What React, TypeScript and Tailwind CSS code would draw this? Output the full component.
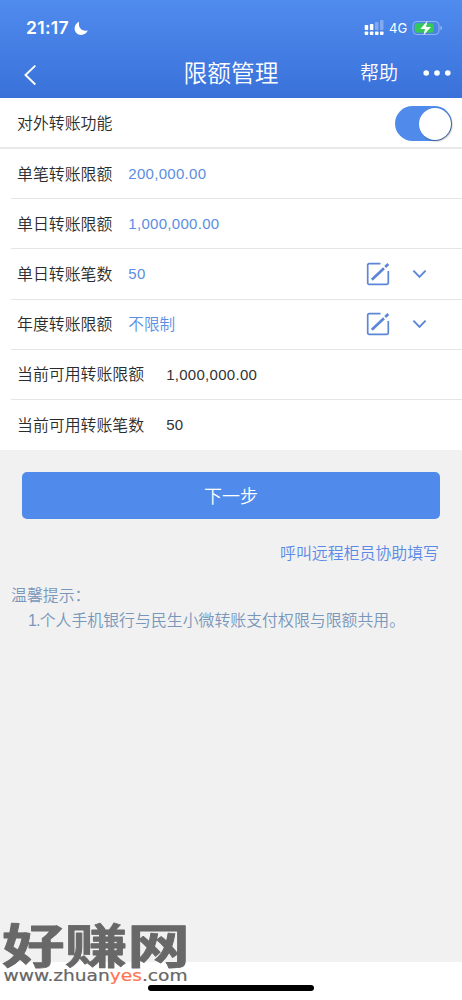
import React from "react";

const CJK = "font-['Liberation_Sans','Noto_Sans_CJK_SC',sans-serif]";

function StatusBar() {
  return (
    <div className="flex h-[56px] items-center justify-between pl-[26px] pr-[19px] font-['Inter',sans-serif]">
      <div className="flex items-center gap-[4px]">
        <span className="w-[44px] whitespace-nowrap text-[17.500px] font-semibold leading-5 tracking-[0.3px]">21:17</span>
        <svg className="h-[15px] w-[15px]" viewBox="0 0 15 15" fill="currentColor">
          <path d="M5.2.8C3.7 6.1 7.6 11 13.9 9.6 12.6 12.4 10 14 7.2 14 3.5 14 .6 11.1.6 7.5.6 4.500 2.400 1.900 5.200.8Z" />
        </svg>
      </div>
      <div className="flex items-center">
        <svg className="mr-[5px] h-[16px] w-[20px]" viewBox="0 0 20 16" fill="currentColor">
          <g opacity=".3">
            <rect x="11" y="2" width="3.500" height="8" rx=".8" />
            <rect x="16" y="0" width="3.500" height="10" rx=".8" />
          </g>
          <rect x=".7" y="5" width="3.500" height="5" rx=".7" />
          <rect x="5.900" y="4" width="3.500" height="6" rx=".7" />
          <rect x=".7" y="11.500" width="3.500" height="3.500" rx=".7" />
          <rect x="5.900" y="11.500" width="3.500" height="3.500" rx=".7" />
          <rect x="11" y="11.500" width="3.500" height="3.500" rx=".7" />
          <rect x="16" y="11.500" width="3.500" height="3.500" rx=".7" />
        </svg>
        <span className="w-[23px] text-[13px] leading-4">4G</span>
        <svg className="h-[16px] w-[31px]" viewBox="0 0 31 16">
          <rect x="1" y="1.500" width="26" height="13" rx="3.800" fill="none" stroke="#fff" strokeOpacity=".4" />
          <rect x="2.700" y="3.200" width="19" height="9.600" rx="2.300" fill="#34c759" />
          <path d="M28.500 5.700c1.800.6 1.800 4 0 4.600Z" fill="#fff" opacity=".5" />
          <path d="M15.500.8 8.300 8.900h4.700L11.500 15.200 19 7h-4.900Z" fill="#fff" />
        </svg>
      </div>
    </div>
  );
}

function Header() {
  return (
    <header className="h-[98px] shrink-0 bg-linear-to-b from-[#508bee] to-[#3971d9] text-white">
      <StatusBar />
      <div className="grid h-[34px] grid-cols-[1fr_auto_1fr] items-center px-[10px]">
        <svg className="ml-[13px] mt-[4px] h-[22px] w-[14px]" viewBox="0 0 14 22" fill="none" stroke="currentColor" strokeWidth="1.900">
          <path d="M12.300 1.600 2.500 11l9.800 9.500" />
        </svg>
        <h1 className="pt-[2px] text-[23.700px] font-[350] leading-8">限额管理</h1>
        <div className="flex items-center justify-end">
          <span className="mr-[25px] pt-[2px] text-[19px] font-[350]">帮助</span>
          <svg className="mr-px h-[6px] w-[28px]" viewBox="0 0 28 6" fill="currentColor">
            <circle cx="3.200" cy="3" r="2.800" />
            <circle cx="14" cy="3" r="2.800" />
            <circle cx="24.800" cy="3" r="2.800" />
          </svg>
        </div>
      </div>
    </header>
  );
}

function EditIcon() {
  return (
    <svg className="h-[24px] w-[24px]" viewBox="0 0 24 24" fill="none" stroke="#5d86d8" strokeWidth="1.700">
      <path d="M14.500 1.700H3A1.300 1.300 0 0 0 1.700 3V21A1.300 1.300 0 0 0 3 22.300h18a1.300 1.300 0 0 0 1.300-1.300V9" />
      <path d="M5.800 17.800 18 6.200M19.200 5 22.300 2" strokeWidth="2.700" />
    </svg>
  );
}

function Row({ label, value, editable, wide, last }: {
  label: string; value: string; editable?: boolean; wide?: boolean; last?: boolean;
}) {
  const numeric = /^[\d,.]+$/.test(value);
  return (
    <div className={`ml-[11px] flex h-[50.200px] items-center border-[#e5e5e5] pl-[6px] pr-[35px] text-[15.900px] ${last ? "" : "border-b"}`}>
      <span className="whitespace-nowrap pt-[2px] font-[350] text-[#2b2b2b]">{label}</span>
      <span
        className={`${wide ? "ml-[22px] text-[#333]" : "ml-[16px] text-[#5b8ee2]"} ${numeric ? "pt-px text-[15px] tracking-[0.29px]" : "pt-[2px] text-[15.600px] font-[350]"}`}
      >
        {value}
      </span>
      {editable && (
        <div className="ml-auto flex items-center gap-[22px]">
          <EditIcon />
          <svg className="h-[10px] w-[15px]" viewBox="0 0 15 10" fill="none" stroke="#5d86d8" strokeWidth="1.900">
            <path d="m1.400 1.700 6.100 6.100 6.100-6.100" />
          </svg>
        </div>
      )}
    </div>
  );
}

function SiteMark() {
  return (
    <svg className="absolute left-0 top-[900px] h-[95px] w-[195px] overflow-visible" viewBox="0 0 195 95">
      <text x="2" y="62.500" textLength="188" lengthAdjust="spacingAndGlyphs" fontSize="47" fontWeight="700" fill="#686868" stroke="#686868" strokeWidth=".8" strokeLinejoin="round" className="font-['Noto_Sans_CJK_SC',sans-serif]">好赚网</text>
      <text x="3.500" y="81" textLength="184" lengthAdjust="spacingAndGlyphs" fontSize="15" fill="#666" stroke="#666" strokeWidth=".2" className="font-['DejaVu_Sans',sans-serif]">
        www.zhuan<tspan fill="#ff7652" stroke="#ff7652">yes</tspan>.com
      </text>
    </svg>
  );
}

export default function App() {
  return (
    <div lang="zh-CN" className={`relative flex h-[1000px] w-[462px] flex-col overflow-hidden bg-white ${CJK}`}>
      <Header />
      <main className="flex flex-1 flex-col bg-[#f1f1f1]">
        <section className="bg-white">
          <div className="flex h-[51px] items-center justify-between border-b-2 border-[#e9e9e9] pl-[17px] pr-[10px]">
            <span className="pt-[2px] text-[15.900px] font-[350] text-[#2b2b2b]">对外转账功能</span>
            <button aria-pressed="true" className="mt-[2px] flex h-[35px] w-[57px] items-center justify-end rounded-full bg-[#508bec] pr-px">
              <span className="h-[32px] w-[32px] rounded-full bg-white shadow-[1px_1px_2px_rgba(0,0,0,0.4)]" />
            </button>
          </div>
          <Row label="单笔转账限额" value="200,000.00" />
          <Row label="单日转账限额" value="1,000,000.00" />
          <Row label="单日转账笔数" value="50" editable />
          <Row label="年度转账限额" value="不限制" editable />
          <Row label="当前可用转账限额" value="1,000,000.00" wide />
          <Row label="当前可用转账笔数" value="50" wide last />
        </section>
        <section className="flex flex-col px-[22px] pt-[22px]">
          <button className="h-[47px] rounded-[5px] bg-[#508bec] pt-[3px] text-[18px] font-[350] text-white">下一步</button>
          <a className="mt-[23px] self-end pr-px text-[15.900px] font-[350] leading-6 text-[#5b8ae6]">呼叫远程柜员协助填写</a>
        </section>
        <section className="mt-[17px] pl-[11px] text-[15.900px] font-[350] leading-[25px] text-[#7897bb]">
          <p>温馨提示：</p>
          <p className="pl-[17px]"><span className="-tracking-[0.8px]">1.</span>个人手机银行与民生小微转账支付权限与限额共用。</p>
        </section>
      </main>
      <footer className="flex h-[38px] shrink-0 justify-center pt-[23px]">
        <div className="h-[6px] w-[166px] rounded-full bg-black" />
      </footer>
      <SiteMark />
    </div>
  );
}
